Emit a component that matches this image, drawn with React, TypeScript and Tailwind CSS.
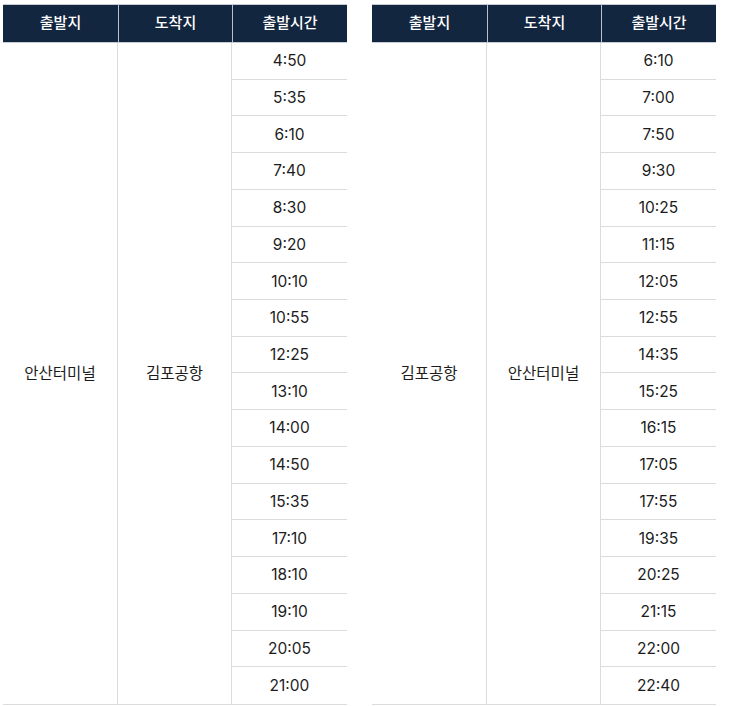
import React from 'react';

type Schedule = {
  from: string;
  to: string;
  times: string[];
};

const schedules: Schedule[] = [
  {
    from: '안산터미널',
    to: '김포공항',
    times: ['4:50', '5:35', '6:10', '7:40', '8:30', '9:20', '10:10', '10:55', '12:25', '13:10', '14:00', '14:50', '15:35', '17:10', '18:10', '19:10', '20:05', '21:00'],
  },
  {
    from: '김포공항',
    to: '안산터미널',
    times: ['6:10', '7:00', '7:50', '9:30', '10:25', '11:15', '12:05', '12:55', '14:35', '15:25', '16:15', '17:05', '17:55', '19:35', '20:25', '21:15', '22:00', '22:40'],
  },
];

const TimeTable: React.FC<{ data: Schedule }> = ({ data }) => (
  <div className="w-[344px]">
    <div className="flex h-[39px] bg-[#13263f] border-y border-[#c8ccd2] text-white text-[15px] font-medium">
      <div className="w-[115px] flex items-center justify-center">출발지</div>
      <div className="w-[114px] flex items-center justify-center border-l border-[#b9c0ca]">도착지</div>
      <div className="w-[115px] flex items-center justify-center border-l border-[#b9c0ca]">출발시간</div>
    </div>
    <div className="flex border-b border-[#dcdcdc] text-[15.5px] text-[#1c1c1c]">
      <div className="w-[115px] flex items-center justify-center border-r border-[#dcdcdc]">{data.from}</div>
      <div className="w-[114px] flex items-center justify-center border-r border-[#dcdcdc]">{data.to}</div>
      <div className="flex-1 flex flex-col">
        {data.times.map((t, i) => (
          <div
            key={i}
            className="h-[36.72px] flex items-center justify-center border-b border-[#dcdcdc] last:border-b-0"
          >
            {t}
          </div>
        ))}
      </div>
    </div>
  </div>
);

const App: React.FC = () => {
  return (
    <div
      className="w-[731px] h-[706px] bg-white pl-[3px] pt-[4px] flex gap-[25px] overflow-hidden"
      style={{ fontFamily: 'Inter, "Noto Sans CJK KR", sans-serif' }}
    >
      {schedules.map((s, i) => (
        <TimeTable key={i} data={s} />
      ))}
    </div>
  );
};

export default App;
